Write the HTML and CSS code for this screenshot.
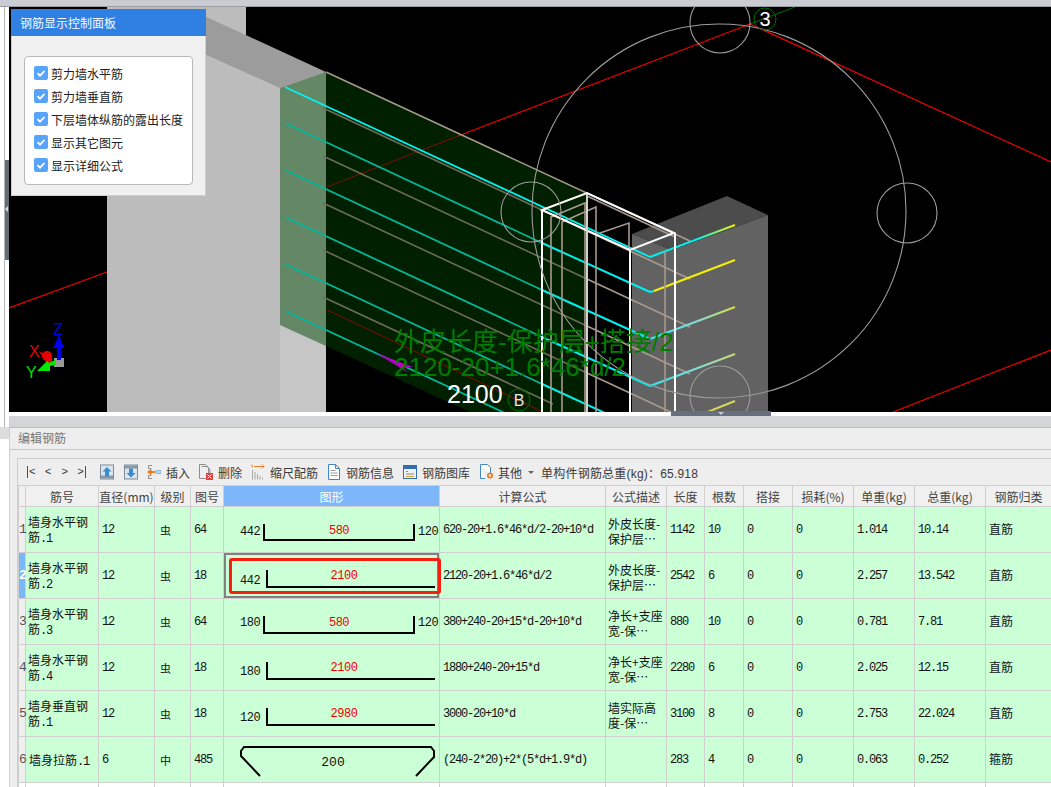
FILE: index.html
```html
<!DOCTYPE html>
<html lang="zh-CN">
<head>
<meta charset="utf-8">
<title>编辑钢筋</title>
<link rel="stylesheet" href="styles.css">
</head>
<body>
<div class="app">
  <div class="top-strip"></div>
  <div class="workspace">
    <aside class="rail">
      <div class="rail-tabs"><div class="rail-grip"></div></div>
      <div class="rail-band"></div>
    </aside>
    <main class="main">
      <section class="viewport">
        <svg class="scene" viewBox="9 7 1042 405" aria-hidden="true">
          <defs>
            <linearGradient id="hookA" gradientUnits="userSpaceOnUse" x1="650" y1="257" x2="735" y2="225">
              <stop offset="0" stop-color="#00f0f0"/><stop offset=".55" stop-color="#00f0f0"/><stop offset="1" stop-color="#f0f000"/>
            </linearGradient>
            <linearGradient id="hookC" gradientUnits="userSpaceOnUse" x1="650" y1="339" x2="735" y2="307">
              <stop offset="0" stop-color="#30e8e8"/><stop offset=".55" stop-color="#80dcd8"/><stop offset="1" stop-color="#d8e040"/>
            </linearGradient>
            <linearGradient id="hookD" gradientUnits="userSpaceOnUse" x1="650" y1="386" x2="735" y2="354">
              <stop offset="0" stop-color="#30e8e8"/><stop offset=".55" stop-color="#80dcd8"/><stop offset="1" stop-color="#c8d870"/>
            </linearGradient>
          </defs>

          <rect class="f-black" x="9" y="7" width="1042" height="405"/>
          <polygon class="f-light" points="107,7 246,7 246,36 326,73 326,412 107,412"/>
          <polygon class="f-top" points="200,14 326,72 280,88 200,52"/>
          <polygon class="f-lighter" points="280,325 326,346 326,412 280,412"/>
          <polygon class="f-glass" points="280,88 326,72 326,346 280,325"/>
          <polygon class="f-deep" points="326,72 587,192 587,412 470,412 326,346"/>

          <polygon class="f-block-top" points="632,234 727,196 768,215 672,250"/>
          <polygon class="f-block" points="632,234 672,250 768,215 768,412 632,412"/>

          <line class="s-red" x1="9" y1="308" x2="107" y2="272"/>
          <line class="s-redd" x1="327" y1="187" x2="458" y2="136"/>
          <line class="s-red" x1="458" y1="136" x2="750" y2="24"/>
          <line class="s-red" x1="750" y1="24" x2="1051" y2="162"/>
          <line class="s-red" x1="893" y1="412" x2="1051" y2="350"/>
          <line class="s-redd" x1="327" y1="310" x2="543" y2="412"/>
          <line class="s-green" x1="750" y1="24" x2="795" y2="7"/>

          <line class="s-tan-top" x1="326" y1="72" x2="690" y2="241"/>
          <g class="s-tan-dim">
            <line x1="323" y1="108" x2="587" y2="231"/>
            <line x1="323" y1="156" x2="587" y2="279"/>
            <line x1="323" y1="203" x2="587" y2="326"/>
            <line x1="323" y1="250" x2="587" y2="373"/>
            <line x1="323" y1="297" x2="553" y2="404"/>
          </g>
          <g class="s-tan">
            <line x1="587" y1="231" x2="690" y2="279"/>
            <line x1="587" y1="279" x2="690" y2="327"/>
            <line x1="587" y1="326" x2="690" y2="374"/>
            <line x1="587" y1="373" x2="690" y2="421"/>
          </g>

          <g class="s-cyan-thin"><line x1="285" y1="87" x2="650" y2="257"/></g>
          <g class="s-teal">
            <line x1="285" y1="123" x2="542" y2="243"/>
            <line x1="285" y1="170" x2="542" y2="290"/>
            <line x1="285" y1="217" x2="542" y2="337"/>
            <line x1="285" y1="264" x2="542" y2="384"/>
            <line x1="285" y1="311" x2="505" y2="413"/>
          </g>
          <g class="s-cyan">
            <line x1="542" y1="243" x2="650" y2="292"/>
            <line x1="542" y1="290" x2="650" y2="339"/>
            <line x1="542" y1="337" x2="650" y2="386"/>
            <line x1="542" y1="384" x2="605" y2="413"/>
          </g>
          <line class="s-hook" stroke="url(#hookA)" x1="650" y1="257" x2="735" y2="225"/>
          <line class="s-hook s-cyan-stub" x1="650" y1="292" x2="654" y2="291"/>
          <line class="s-hook s-yellow" x1="654" y1="291" x2="735" y2="260"/>
          <line class="s-hook" stroke="url(#hookC)" x1="650" y1="339" x2="735" y2="307"/>
          <line class="s-hook" stroke="url(#hookD)" x1="650" y1="386" x2="735" y2="354"/>
          <line class="s-hook s-pale" x1="705" y1="413" x2="735" y2="401"/>

          <polygon class="f-purple" points="376,353 407,372 404,368 413,367"/>

          <g class="s-wire">
            <polyline points="551,412 551,217 585,203 585,412"/>
            <polyline points="562,412 562,222 596,207 596,412"/>
            <polyline points="600,233 629,223 629,250"/>
            <line x1="665" y1="252" x2="665" y2="412"/>
            <line x1="587" y1="196" x2="675" y2="237"/>
          </g>
          <g class="s-white">
            <polygon points="542,210 587,193 674,233 630,250"/>
            <line x1="542" y1="210" x2="542" y2="412"/>
            <line x1="630" y1="250" x2="630" y2="412"/>
            <line x1="675" y1="233" x2="675" y2="412"/>
          </g>
          <line class="s-pale-post" x1="587" y1="194" x2="587" y2="412"/>

          <g class="s-circle">
            <circle cx="719" cy="211" r="187"/>
            <circle cx="720" cy="23" r="30"/>
            <circle cx="907" cy="213" r="30"/>
            <circle cx="531" cy="212" r="30"/>
            <circle cx="720" cy="396" r="30"/>
          </g>

          <circle class="s-green-ring" cx="765" cy="19" r="11"/>
          <circle class="s-green-ring" cx="519" cy="400" r="11"/>
          <text class="t-axis" x="765" y="26" text-anchor="middle">3</text>
          <text class="t-axis-b" x="519" y="406" text-anchor="middle">B</text>

          <text class="t-note" x="394" y="351">外皮长度-保护层+搭接/2</text>
          <text class="t-note" x="394" y="376">2120-20+1.6*46*d/2</text>
          <text class="t-dim" x="447" y="403">2100</text>

          <text class="t-gizmo t-x" x="29" y="357">X</text>
          <text class="t-gizmo t-y" x="26" y="378">Y</text>
          <text class="t-gizmo t-z" x="53" y="335">Z</text>
          <rect class="f-gizmo" x="54" y="358" width="10" height="9"/>
          <polygon class="f-z" points="59,335 64,348 61,348 61,360 57,360 57,348 53,348"/>
          <polygon class="f-x" points="39,351 52,358 52,362 55,361 50,365 46,362"/>
          <circle class="f-x" cx="47" cy="356" r="5"/>
          <polygon class="f-y" points="37,371 47,361 49,363 55,360 56,365 50,366 50,371"/>
        </svg>

        <div class="panel">
          <h2 class="panel-title">钢筋显示控制面板</h2>
          <div class="panel-body">
            <ul class="check-list">
              <li class="check-item"><svg class="check" viewBox="0 0 14 14"><rect class="check-box" width="14" height="14" rx="2"/><path class="check-mark" d="M3.5 7.2 6 9.7 10.5 5"/></svg>剪力墙水平筋</li>
              <li class="check-item"><svg class="check" viewBox="0 0 14 14"><rect class="check-box" width="14" height="14" rx="2"/><path class="check-mark" d="M3.5 7.2 6 9.7 10.5 5"/></svg>剪力墙垂直筋</li>
              <li class="check-item"><svg class="check" viewBox="0 0 14 14"><rect class="check-box" width="14" height="14" rx="2"/><path class="check-mark" d="M3.5 7.2 6 9.7 10.5 5"/></svg>下层墙体纵筋的露出长度</li>
              <li class="check-item"><svg class="check" viewBox="0 0 14 14"><rect class="check-box" width="14" height="14" rx="2"/><path class="check-mark" d="M3.5 7.2 6 9.7 10.5 5"/></svg>显示其它图元</li>
              <li class="check-item"><svg class="check" viewBox="0 0 14 14"><rect class="check-box" width="14" height="14" rx="2"/><path class="check-mark" d="M3.5 7.2 6 9.7 10.5 5"/></svg>显示详细公式</li>
            </ul>
          </div>
        </div>
      </section>

      <section class="editor">
        <div class="drag-handle"></div>
        <div class="white-gap"></div>
        <div class="editor-band"></div>
        <h1 class="editor-title">编辑钢筋</h1>
        <div class="sheet">
          <div class="toolbar">
            <div class="nav">
              <span class="nav-btn"><i class="nav-bar"></i>&lt;</span>
              <span class="nav-btn">&lt;</span>
              <span class="nav-btn">&gt;</span>
              <span class="nav-btn">&gt;<i class="nav-bar"></i></span>
            </div>
            <svg class="icon icon-up" viewBox="0 0 14 15"><rect class="i-frame" x=".5" y=".5" width="13" height="14"/><rect class="i-grey" x="1" y="11" width="12" height="3"/><path class="i-blue" d="M7 2.5 11.5 7H9v5H5V7H2.500z"/></svg>
            <svg class="icon icon-down" viewBox="0 0 14 15"><rect class="i-frame" x=".5" y=".5" width="13" height="14"/><rect class="i-grey" x="1" y="1" width="12" height="3"/><path class="i-blue" d="M7 13 2.500 8.500H5V4h4v4.500h2.500z"/></svg>
            <span class="tool tool-insert"><svg class="icon" viewBox="0 0 14 16"><path class="i-line-grey" d="M5 1.500H1.500v3H4M5 14.500H1.500v-3H4"/><path class="i-orange" d="M0 8 4.500 4.500V7H8v2H4.500v2.500z"/><rect class="i-cyan" x="9" y="6.500" width="5" height="3"/></svg>插入</span>
            <span class="tool tool-delete"><svg class="icon" viewBox="0 0 14 16"><path class="i-line-grey" d="M.5.500h6l3 3v11h-9zM3 3v-.500"/><path class="i-line-grey" d="M3 2.500h5l3 3V10"/><rect class="i-red" x="7" y="9" width="7" height="7"/><path class="i-x" d="M8.500 10.500l4 4M12.500 10.500l-4 4"/></svg>删除</span>
            <span class="tool tool-scale"><svg class="icon" viewBox="0 0 14 16"><path class="i-line-orange" d="M3 2.500h10M11 .500l2 2-2 2"/><path class="i-line-orange" d="M1 .500v3"/><path class="i-stairs" d="M1.500 6v9.500M4 8v7.500M6.500 10v5.500M9 12v3.500M11.500 13.500v2"/></svg>缩尺配筋</span>
            <span class="tool tool-info"><svg class="icon" viewBox="0 0 14 16"><path class="i-line-blue" d="M1.500.500h7l4 4v11h-11zM8.500.500v4h4"/><path class="i-line-blue-dim" d="M3.500 6.500h5M3.500 9h7M3.500 11.500h7"/></svg>钢筋信息</span>
            <span class="tool tool-lib"><svg class="icon" viewBox="0 0 14 16"><rect class="i-frame-blue" x=".5" y="1.500" width="13" height="13"/><rect class="i-dark-blue" x="1" y="2" width="12" height="3"/><path class="i-line-dark" d="M3 7.500h2M3 10h8"/><path class="i-line-multi" d="M3 12.500h8"/></svg>钢筋图库</span>
            <span class="tool tool-other"><svg class="icon icon-wide" viewBox="0 0 16 16"><path class="i-line-blue" d="M1.500.500h7l3 3v7M1.500.500v14H6"/><circle class="i-gear" cx="11" cy="11.500" r="3"/><circle class="i-gear-hole" cx="11" cy="11.500" r="1.200"/></svg>其他<span class="caret"></span></span>
            <span class="total">单构件钢筋总重(kg)：65.918</span>
          </div>

          <table class="grid">
            <colgroup>
              <col class="c-rh"><col class="c-name"><col class="c-dia"><col class="c-lvl"><col class="c-fig"><col class="c-shape"><col class="c-calc"><col class="c-desc"><col class="c-len"><col class="c-cnt"><col class="c-lap"><col class="c-loss"><col class="c-unit"><col class="c-sum"><col class="c-type">
            </colgroup>
            <thead>
              <tr>
                <th></th><th>筋号</th><th>直径(mm)</th><th>级别</th><th>图号</th><th class="th-active">图形</th><th>计算公式</th><th>公式描述</th><th>长度</th><th>根数</th><th>搭接</th><th>损耗(%)</th><th>单重(kg)</th><th>总重(kg)</th><th>钢筋归类</th>
              </tr>
            </thead>
            <tbody>
              <tr>
                <td class="rh">1</td>
                <td class="txt">墙身水平钢<br>筋<span class="latin">.1</span></td>
                <td class="num">12</td><td class="sym">虫</td><td class="num">64</td>
                <td class="shape"><svg class="fig" viewBox="0 0 216 45"><text class="d" x="16" y="28">442</text><polyline class="bar" points="40,17 40,33 190,33 190,17"/><text class="d-red" x="115" y="27" text-anchor="middle">580</text><text class="d" x="194" y="28">120</text></svg></td>
                <td class="num">620-20+1.6*46*d/2-20+10*d</td>
                <td class="txt">外皮长度-<br>保护层⋯</td>
                <td class="num">1142</td><td class="num">10</td><td class="num">0</td><td class="num">0</td><td class="num">1.014</td><td class="num">10.14</td><td class="txt-type">直筋</td>
              </tr>
              <tr>
                <td class="rh rh-active">2</td>
                <td class="txt">墙身水平钢<br>筋<span class="latin">.2</span></td>
                <td class="num">12</td><td class="sym">虫</td><td class="num">18</td>
                <td class="shape shape-active"><svg class="fig" viewBox="0 0 216 45"><text class="d" x="16" y="31">442</text><polyline class="bar" points="43,17 43,34 211,34"/><text class="d-red" x="120" y="26" text-anchor="middle">2100</text></svg><span class="callout"></span></td>
                <td class="num">2120-20+1.6*46*d/2</td>
                <td class="txt">外皮长度-<br>保护层⋯</td>
                <td class="num">2542</td><td class="num">6</td><td class="num">0</td><td class="num">0</td><td class="num">2.257</td><td class="num">13.542</td><td class="txt-type">直筋</td>
              </tr>
              <tr>
                <td class="rh">3</td>
                <td class="txt">墙身水平钢<br>筋<span class="latin">.3</span></td>
                <td class="num">12</td><td class="sym">虫</td><td class="num">64</td>
                <td class="shape"><svg class="fig" viewBox="0 0 216 45"><text class="d" x="16" y="27">180</text><polyline class="bar" points="40,17 40,34 190,34 190,17"/><text class="d-red" x="115" y="27" text-anchor="middle">580</text><text class="d" x="194" y="27">120</text></svg></td>
                <td class="num">380+240-20+15*d-20+10*d</td>
                <td class="txt">净长+支座<br>宽-保⋯</td>
                <td class="num">880</td><td class="num">10</td><td class="num">0</td><td class="num">0</td><td class="num">0.781</td><td class="num">7.81</td><td class="txt-type">直筋</td>
              </tr>
              <tr>
                <td class="rh">4</td>
                <td class="txt">墙身水平钢<br>筋<span class="latin">.4</span></td>
                <td class="num">12</td><td class="sym">虫</td><td class="num">18</td>
                <td class="shape"><svg class="fig" viewBox="0 0 216 45"><text class="d" x="16" y="30">180</text><polyline class="bar" points="43,17 43,34 211,34"/><text class="d-red" x="120" y="26" text-anchor="middle">2100</text></svg></td>
                <td class="num">1880+240-20+15*d</td>
                <td class="txt">净长+支座<br>宽-保⋯</td>
                <td class="num">2280</td><td class="num">6</td><td class="num">0</td><td class="num">0</td><td class="num">2.025</td><td class="num">12.15</td><td class="txt-type">直筋</td>
              </tr>
              <tr>
                <td class="rh">5</td>
                <td class="txt">墙身垂直钢<br>筋<span class="latin">.1</span></td>
                <td class="num">12</td><td class="sym">虫</td><td class="num">18</td>
                <td class="shape"><svg class="fig" viewBox="0 0 216 45"><text class="d" x="16" y="30">120</text><polyline class="bar" points="43,17 43,34 211,34"/><text class="d-red" x="120" y="26" text-anchor="middle">2980</text></svg></td>
                <td class="num">3000-20+10*d</td>
                <td class="txt">墙实际高<br>度-保⋯</td>
                <td class="num">3100</td><td class="num">8</td><td class="num">0</td><td class="num">0</td><td class="num">2.753</td><td class="num">22.024</td><td class="txt-type">直筋</td>
              </tr>
              <tr>
                <td class="rh">6</td>
                <td class="txt-single">墙身拉筋<span class="latin">.1</span></td>
                <td class="num">6</td><td class="sym">中</td><td class="num">485</td>
                <td class="shape"><svg class="fig" viewBox="0 0 216 45"><polyline class="bar" points="36,39 17,19 17,14 20,10 207,10 210,14 210,20 192,39"/><text class="d d-big" x="109" y="29" text-anchor="middle">200</text></svg></td>
                <td class="num">(240-2*20)+2*(5*d+1.9*d)</td>
                <td class="txt"></td>
                <td class="num">283</td><td class="num">4</td><td class="num">0</td><td class="num">0</td><td class="num">0.063</td><td class="num">0.252</td><td class="txt-type">箍筋</td>
              </tr>
              <tr class="row-empty">
                <td class="rh"></td><td></td><td></td><td></td><td></td><td></td><td></td><td></td><td></td><td></td><td></td><td></td><td></td><td></td><td></td>
              </tr>
            </tbody>
          </table>
        </div>
      </section>
    </main>
  </div>
</div>
</body>
</html>
```

FILE: styles.css
```css
* { box-sizing: border-box; }
html, body { margin: 0; padding: 0; height: 100%; overflow: hidden; background: #fff; }
body { font-family: "Noto Sans CJK SC", "Liberation Sans", sans-serif; font-size: 12px; color: #222; }

.app { width: 1051px; height: 787px; display: flex; flex-direction: column; overflow: hidden; }
.top-strip { height: 7px; flex: none; background: #c9cdd3; border-bottom: 1px solid #9a9ea4; }
.workspace { flex: 1; display: flex; min-height: 0; }

.rail { width: 9px; flex: none; display: flex; flex-direction: column; background: #fff; border-left: 4px solid #fff; }
.rail-tabs { height: 420px; flex: none; border-left: 1px solid #b4b4b4; padding-top: 153px; }
.rail-grip { width: 4px; height: 100px; background: #636d78; position: relative; }
.rail-grip::after { content: ""; position: absolute; left: 0; top: 46px; border: 3px solid transparent; border-right-color: #d8dce0; border-left-width: 0; }
.rail-band { height: 12px; background: #dcdcdc; margin-left: -4px; }

.main { flex: 1; display: flex; flex-direction: column; min-width: 0; }

.viewport { height: 405px; flex: none; position: relative; background: #000; }
.scene { display: block; width: 1042px; height: 405px; }

.f-black { fill: #000; }
.f-light { fill: #bcbcbc; }
.f-lighter { fill: #c6c6c6; }
.f-top { fill: #9c9c9c; }
.f-glass { fill: #648766; }
.f-deep { fill: #002000; }
.f-block { fill: #626262; }
.f-block-top { fill: #4c4c4c; }
.f-purple { fill: #b000c0; }

line, polyline { fill: none; }
.s-red { stroke: #f00000; stroke-width: 1.2; }
.s-redd { stroke: #701000; stroke-width: 1.2; }
.s-green { stroke: #007000; stroke-width: 1; }
.s-tan-top { stroke: #a89c8c; stroke-width: 1.5; }
.s-tan-dim line { stroke: #6c6c58; stroke-width: 1.6; }
.s-tan line { stroke: #a89a90; stroke-width: 1.6; }
.s-cyan-thin line { stroke: #00f4f4; stroke-width: 1.8; }
.s-teal line { stroke: #00b89c; stroke-width: 1.8; }
.s-cyan line { stroke: #00eeee; stroke-width: 2; }
.s-hook { stroke-width: 2; }
.s-cyan-stub { stroke: #00eeee; }
.s-yellow { stroke: #f4f000; }
.s-pale { stroke: #d8d860; }
.s-wire { fill: none; stroke: #a89a90; stroke-width: 1.6; }
.s-white { fill: none; stroke: #fff; stroke-width: 2; }
.s-pale-post { stroke: #d0d4c8; stroke-width: 2; }
.s-circle { fill: none; stroke: #9c9c9c; stroke-width: 1.1; }
.s-green-ring { fill: none; stroke: #007000; stroke-width: 1; }

.t-axis { font: 20px "Liberation Sans", sans-serif; fill: #fff; }
.t-axis-b { font: 16px "Liberation Sans", sans-serif; fill: #e8e8e8; }
.t-note { font: 26px "Liberation Sans", "Noto Sans CJK SC", sans-serif; fill: #007c00; }
.t-dim { font: 25px "Liberation Sans", sans-serif; fill: #fff; }
.t-gizmo { font: 16px "Liberation Sans", sans-serif; }
.t-x { fill: #e80000; }
.t-y { fill: #00e000; }
.t-z { fill: #0000f0; }
.f-gizmo { fill: #999; }
.f-z { fill: #0000f0; }
.f-x { fill: #e80000; }
.f-y { fill: #00e800; }

.panel { position: absolute; left: 2px; top: 2px; width: 195px; height: 187px; background: #f0f0f0; border: 1px solid #c6d0df; border-top: 0; }
.panel-title { margin: 0 -1px; height: 27px; padding: 0 9px; background: #2f80e2; color: #f4f8fe; font-size: 12px; font-weight: 400; line-height: 27px; }
.panel-body { padding: 20px 12px 10px; }
.check-list { list-style: none; margin: 0; padding: 7px 9px 0; height: 129px; background: #fff; border: 1px solid #b8b8b8; border-radius: 4px; display: flex; flex-direction: column; gap: 5px; }
.check-item { display: flex; align-items: center; gap: 3px; height: 18px; color: #222; white-space: nowrap; }
.check { width: 14px; height: 14px; flex: none; }
.check-box { fill: #58a4fb; }
.check-mark { fill: none; stroke: #fff; stroke-width: 1.800; }

.editor { flex: 1; min-height: 0; position: relative; background: #eee; display: flex; flex-direction: column; border-left: 1px solid #cfcfcf; }
.drag-handle { position: absolute; left: 661px; top: -1px; width: 100px; height: 5px; background: #667080; }
.drag-handle::after { content: ""; position: absolute; left: 47px; top: 1px; border: 3px solid transparent; border-top-color: #c8ccd2; border-bottom-width: 0; }
.white-gap { height: 4px; flex: none; background: #fff; margin-left: -1px; }
.editor-band { height: 12px; flex: none; background: #d4d5d9; border-bottom: 1px solid #bbbcc0; }
.editor-title { margin: 0; height: 22px; flex: none; padding-left: 8px; font-size: 12px; font-weight: 400; line-height: 20px; color: #777; border-bottom: 1px solid #c8c8c8; }
.sheet { margin: 8px 0 0 7px; flex: 1; min-height: 0; border-top: 1px solid #cdcdcd; border-left: 1px solid #cdcdcd; }

.toolbar { height: 26px; display: flex; align-items: center; color: #3a3a3a; white-space: nowrap; padding-left: 5px; }
.nav { display: flex; width: 67px; gap: 0; font: 11px "Liberation Mono", monospace; color: #333; }
.nav-btn { width: 16.750px; display: flex; align-items: center; justify-content: center; gap: 1px; }
.nav-bar { display: inline-block; width: 1px; height: 12px; background: #6a3a70; }
.icon { width: 14px; height: 16px; flex: none; }
.icon-wide { width: 16px; }
.icon-up { margin-left: 10px; }
.icon-down { margin-left: 10px; }
.tool { display: flex; align-items: center; gap: 5px; }
.tool-insert { margin-left: 9px; }
.tool-delete { margin-left: 9px; }
.tool-scale { margin-left: 9px; }
.tool-info { margin-left: 9px; }
.tool-lib { margin-left: 9px; }
.tool-other { margin-left: 9px; gap: 3px; }
.total { margin-left: 7px; font-family: "Liberation Sans", "Noto Sans CJK SC", sans-serif; color: #3a3a3a; letter-spacing: .2px; }
.caret { width: 0; height: 0; margin-left: 3px; border: 3px solid transparent; border-top: 3px solid #666; border-bottom-width: 0; }

.i-frame { fill: #dbe5ee; stroke: #7b8b99; }
.i-grey { fill: #8b99a6; }
.i-blue { fill: #3a8ad0; }
.i-line-grey { fill: none; stroke: #8e8e8e; }
.i-orange { fill: #e87a1e; }
.i-cyan { fill: #bcd8ee; stroke: #5b9bd0; stroke-width: .6; }
.i-red { fill: #e04040; }
.i-x { fill: none; stroke: #fff; }
.i-line-orange { fill: none; stroke: #e8802a; }
.i-stairs { fill: none; stroke: #a8a8a8; }
.i-line-blue { fill: #fff; stroke: #3f88c8; }
.i-line-blue-dim { fill: none; stroke: #9a9a9a; }
.i-frame-blue { fill: #eef2f6; stroke: #2f6db0; }
.i-dark-blue { fill: #2f6db0; }
.i-line-dark { fill: none; stroke: #888; }
.i-line-multi { fill: none; stroke: #d8a030; }
.i-gear { fill: #ee7a1e; }
.i-gear-hole { fill: #fff; }

.grid { table-layout: fixed; width: 1033px; border-collapse: collapse; background: #fff; }
.grid th, .grid td { border: 1px solid #cfcfcf; padding: 0; }
.grid th { height: 21px; padding-top: 1px; background: #f0f0f0; font-weight: 400; font-size: 12px; line-height: 16px; text-align: center; color: #444; white-space: nowrap; overflow: hidden; }
.grid .th-active { background: #7db7fa; color: #fff; }
.grid tbody tr { height: 46px; }
.grid td { background: #cbffd6; color: #111; overflow: hidden; }
.grid .row-empty { height: 10px; }
.grid .row-empty td { background: #fff; }
.grid .rh { background: #efefef; text-align: center; font: 13px "Liberation Mono", monospace; color: #555; overflow: visible; }
.grid .rh-active { background: #7ab7f5; color: #fff; font-weight: 700; }

.c-rh { width: 7px; } .c-name { width: 73px; } .c-dia { width: 56px; } .c-lvl { width: 36px; } .c-fig { width: 33px; }
.c-shape { width: 216px; } .c-calc { width: 166px; } .c-desc { width: 61px; } .c-len { width: 38px; } .c-cnt { width: 39px; }
.c-lap { width: 49px; } .c-loss { width: 61px; } .c-unit { width: 61px; } .c-sum { width: 71px; } .c-type { width: 66px; }

.grid .txt { padding: 2px 0 0 2px; line-height: 15px; font-size: 12px; white-space: nowrap; }
.grid .txt-single { padding-left: 3px; font-size: 12px; white-space: nowrap; }
.grid .txt-type { padding: 0 0 2px 3px; font-size: 12px; white-space: nowrap; }
.latin { font-family: "Liberation Mono", monospace; font-size: 12px; letter-spacing: -1.2px; }
.grid .num { padding-left: 3px; font: 12px "Liberation Mono", monospace; letter-spacing: -1.2px; white-space: nowrap; }
.grid .sym { padding-left: 5px; font-size: 11px; }
.grid .shape { position: relative; overflow: visible; }
.grid .shape-active { box-shadow: inset 0 0 0 2px #808080; }
.fig { display: block; width: 216px; height: 45px; }
.bar { fill: none; stroke: #000; stroke-width: 2; }
.d { font: 12px "Liberation Mono", monospace; letter-spacing: -.5px; fill: #111; }
.d-big { font-size: 13px; letter-spacing: 0; }
.d-red { font: 12px "Liberation Mono", monospace; letter-spacing: -.5px; fill: #ee0000; }
.callout { position: absolute; left: 5px; top: 5px; width: 212px; height: 36px; border: 3px solid #f51e10; border-radius: 3px; }
```
